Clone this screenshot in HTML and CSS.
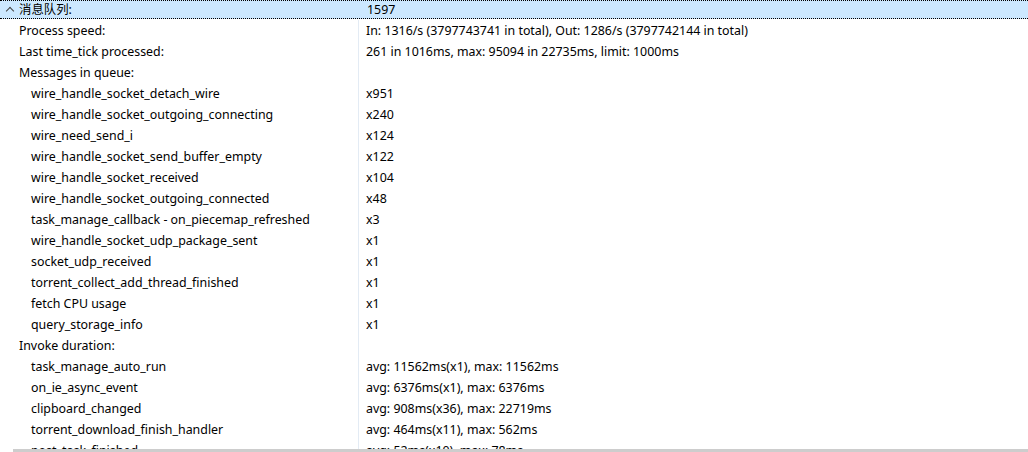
FILE: index.html
```html
<!DOCTYPE html>
<html lang="zh-CN">
<head>
	<meta charset="UTF-8">
	<title>消息队列</title>
	<link rel="stylesheet" href="styles.css">
</head>
<body>
	<div class="view">
		<div class="list">
			<div class="row group selected">
				<div class="name"><span class="arrow"></span>消息队列:</div>
				<div class="value">1597</div>
			</div>
			<div class="row">
				<div class="name lv1">Process speed:</div>
				<div class="value">In: 1316/s (3797743741 in total), Out: 1286/s (3797742144 in total)</div>
			</div>
			<div class="row">
				<div class="name lv1">Last time_tick processed:</div>
				<div class="value">261 in 1016ms, max: 95094 in 22735ms, limit: 1000ms</div>
			</div>
			<div class="row">
				<div class="name lv1">Messages in queue:</div>
				<div class="value"></div>
			</div>
			<div class="row">
				<div class="name lv2">wire_handle_socket_detach_wire</div>
				<div class="value">x951</div>
			</div>
			<div class="row">
				<div class="name lv2">wire_handle_socket_outgoing_connecting</div>
				<div class="value">x240</div>
			</div>
			<div class="row">
				<div class="name lv2">wire_need_send_i</div>
				<div class="value">x124</div>
			</div>
			<div class="row">
				<div class="name lv2">wire_handle_socket_send_buffer_empty</div>
				<div class="value">x122</div>
			</div>
			<div class="row">
				<div class="name lv2">wire_handle_socket_received</div>
				<div class="value">x104</div>
			</div>
			<div class="row">
				<div class="name lv2">wire_handle_socket_outgoing_connected</div>
				<div class="value">x48</div>
			</div>
			<div class="row">
				<div class="name lv2">task_manage_callback - on_piecemap_refreshed</div>
				<div class="value">x3</div>
			</div>
			<div class="row">
				<div class="name lv2">wire_handle_socket_udp_package_sent</div>
				<div class="value">x1</div>
			</div>
			<div class="row">
				<div class="name lv2">socket_udp_received</div>
				<div class="value">x1</div>
			</div>
			<div class="row">
				<div class="name lv2">torrent_collect_add_thread_finished</div>
				<div class="value">x1</div>
			</div>
			<div class="row">
				<div class="name lv2">fetch CPU usage</div>
				<div class="value">x1</div>
			</div>
			<div class="row">
				<div class="name lv2">query_storage_info</div>
				<div class="value">x1</div>
			</div>
			<div class="row">
				<div class="name lv1">Invoke duration:</div>
				<div class="value"></div>
			</div>
			<div class="row">
				<div class="name lv2">task_manage_auto_run</div>
				<div class="value">avg: 11562ms(x1), max: 11562ms</div>
			</div>
			<div class="row">
				<div class="name lv2">on_ie_async_event</div>
				<div class="value">avg: 6376ms(x1), max: 6376ms</div>
			</div>
			<div class="row">
				<div class="name lv2">clipboard_changed</div>
				<div class="value">avg: 908ms(x36), max: 22719ms</div>
			</div>
			<div class="row">
				<div class="name lv2">torrent_download_finish_handler</div>
				<div class="value">avg: 464ms(x11), max: 562ms</div>
			</div>
			<div class="row">
				<div class="name lv2">post_task_finished</div>
				<div class="value">avg: 52ms(x10), max: 78ms</div>
			</div>
		</div>
		<div class="hscroll"></div>
	</div>
</body>
</html>
```

FILE: styles.css
```css
html, body{ margin: 0; padding: 0; background: #fff; }
body{
	font-family: "Noto Sans", "Noto Sans CJK SC", sans-serif; font-size: 12.4px; color: #000;
	width: 1028px; height: 452px; overflow: hidden;
}
.view{ display: flex; flex-direction: column; height: 452px; }
.list{ flex: 1; overflow: hidden; }
.row{ display: flex; height: 21px; line-height: 21px; white-space: nowrap; }
.name{
	width: 359px; flex: none; box-sizing: border-box; border-right: 1px solid #e3ebf4;
	padding-left: 19px; overflow: hidden;
}
.name.lv2{ padding-left: 31px; }
.value{ flex: 1; padding-left: 7px; overflow: hidden; }
.row.group{ height: 19px; line-height: 17px; margin-bottom: 1px; }
.row.group .name{ border-right: none; padding-left: 0; display: flex; align-items: center; }
.row.selected{
	background: #cce8ff; border-top: 1px dotted #000; border-bottom: 1px dotted #000;
	box-sizing: border-box;
}
.row.group .value{ padding-left: 8px; }
.arrow{
	width: 5px; height: 5px; border-left: 1px solid #444; border-top: 1px solid #444;
	transform: rotate(45deg); margin: 3px 6px 0 7px;
}
.hscroll{ height: 3px; margin-left: 13px; background: #cdcdcd; flex: none; }
```
